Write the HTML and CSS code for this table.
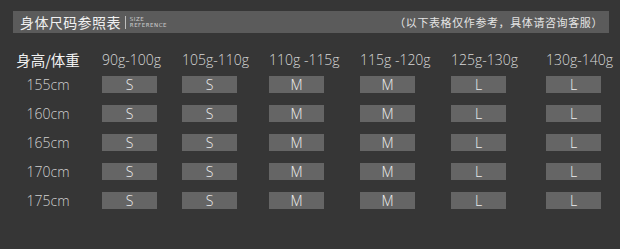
FILE: index.html
```html
<!DOCTYPE html>
<html lang="zh">
<head>
<meta charset="utf-8">
<link rel="stylesheet" href="styles.css">
</head>
<body>
<div class="page">
  <div class="bar">
    <span class="title">身体尺码参照表</span>
    <span class="sep"></span>
    <span class="sub">SIZE<br>REFERENCE</span>
    <span class="note">（以下表格仅作参考，具体请咨询客服）</span>
  </div>
  <div class="table">
    <div class="rowhead head">身高/体重</div>
    <div class="colhead">90g-100g</div>
    <div class="colhead">105g-110g</div>
    <div class="colhead">110g -115g</div>
    <div class="colhead">115g -120g</div>
    <div class="colhead">125g-130g</div>
    <div class="colhead">130g-140g</div>

    <div class="rowhead">155cm</div>
    <div class="cell"><span class="box">S</span></div>
    <div class="cell"><span class="box">S</span></div>
    <div class="cell"><span class="box">M</span></div>
    <div class="cell"><span class="box">M</span></div>
    <div class="cell"><span class="box">L</span></div>
    <div class="cell"><span class="box">L</span></div>

    <div class="rowhead">160cm</div>
    <div class="cell"><span class="box">S</span></div>
    <div class="cell"><span class="box">S</span></div>
    <div class="cell"><span class="box">M</span></div>
    <div class="cell"><span class="box">M</span></div>
    <div class="cell"><span class="box">L</span></div>
    <div class="cell"><span class="box">L</span></div>

    <div class="rowhead">165cm</div>
    <div class="cell"><span class="box">S</span></div>
    <div class="cell"><span class="box">S</span></div>
    <div class="cell"><span class="box">M</span></div>
    <div class="cell"><span class="box">M</span></div>
    <div class="cell"><span class="box">L</span></div>
    <div class="cell"><span class="box">L</span></div>

    <div class="rowhead">170cm</div>
    <div class="cell"><span class="box">S</span></div>
    <div class="cell"><span class="box">S</span></div>
    <div class="cell"><span class="box">M</span></div>
    <div class="cell"><span class="box">M</span></div>
    <div class="cell"><span class="box">L</span></div>
    <div class="cell"><span class="box">L</span></div>

    <div class="rowhead">175cm</div>
    <div class="cell"><span class="box">S</span></div>
    <div class="cell"><span class="box">S</span></div>
    <div class="cell"><span class="box">M</span></div>
    <div class="cell"><span class="box">M</span></div>
    <div class="cell"><span class="box">L</span></div>
    <div class="cell"><span class="box">L</span></div>
  </div>
</div>
</body>
</html>
```
FILE: styles.css
```css
html, body {
  margin: 0;
  padding: 0;
  background: #363636;
}
.page {
  width: 620px;
  height: 249px;
  padding-top: 11px;
  box-sizing: border-box;
  font-family: "Open Sans", "Noto Sans", "Noto Sans CJK SC", sans-serif;
  font-weight: 300;
  color: #d8d8d8;
}
.bar {
  margin-left: 13px;
  width: 596px;
  height: 22px;
  background: #5b5b5b;
  display: flex;
  align-items: center;
  padding-left: 7px;
  box-sizing: border-box;
}
.title {
  font-family: "Noto Sans CJK SC", sans-serif;
  font-weight: 400;
  font-size: 14px;
  letter-spacing: 0.4px;
  color: #f0f0f0;
  line-height: 1;
}
.sep {
  width: 1px;
  height: 13px;
  background: #bdbdbd;
  margin: 0 4px 0 4px;
}
.sub {
  font-family: "DejaVu Sans", sans-serif;
  font-weight: 400;
  font-size: 5.5px;
  line-height: 6px;
  letter-spacing: 0.5px;
  color: #d0d0d0;
}
.note {
  margin-left: auto;
  padding-right: 6px;
  font-family: "Noto Sans CJK SC", sans-serif;
  font-weight: 400;
  font-size: 11px;
  letter-spacing: 0.6px;
  color: #e4e4e4;
  line-height: 1;
}
.table {
  display: grid;
  grid-template-columns: 102px 80px 87px 91px 91px 95px 74px;
  grid-template-rows: 26px repeat(5, 29px);
  margin-top: 17px;
}
.rowhead {
  padding-right: 6px;
  text-align: center;
  font-size: 14px;
  line-height: 17px;
  color: #d0d0d0;
  white-space: nowrap;
}
.rowhead.head {
  font-family: "Noto Sans CJK SC", sans-serif;
  font-weight: 400;
  font-size: 14.5px;
  line-height: 20px;
  color: #f2f2f2;
  padding-right: 6px;
}
.colhead {
  font-size: 14px;
  line-height: 20px;
  white-space: nowrap;
  color: #d8d8d8;
}
.cell {
  display: flex;
}
.box {
  width: 55px;
  height: 17px;
  background: #656565;
  color: #f0f0f0;
  font-size: 14px;
  line-height: 17px;
  text-align: center;
}
```
